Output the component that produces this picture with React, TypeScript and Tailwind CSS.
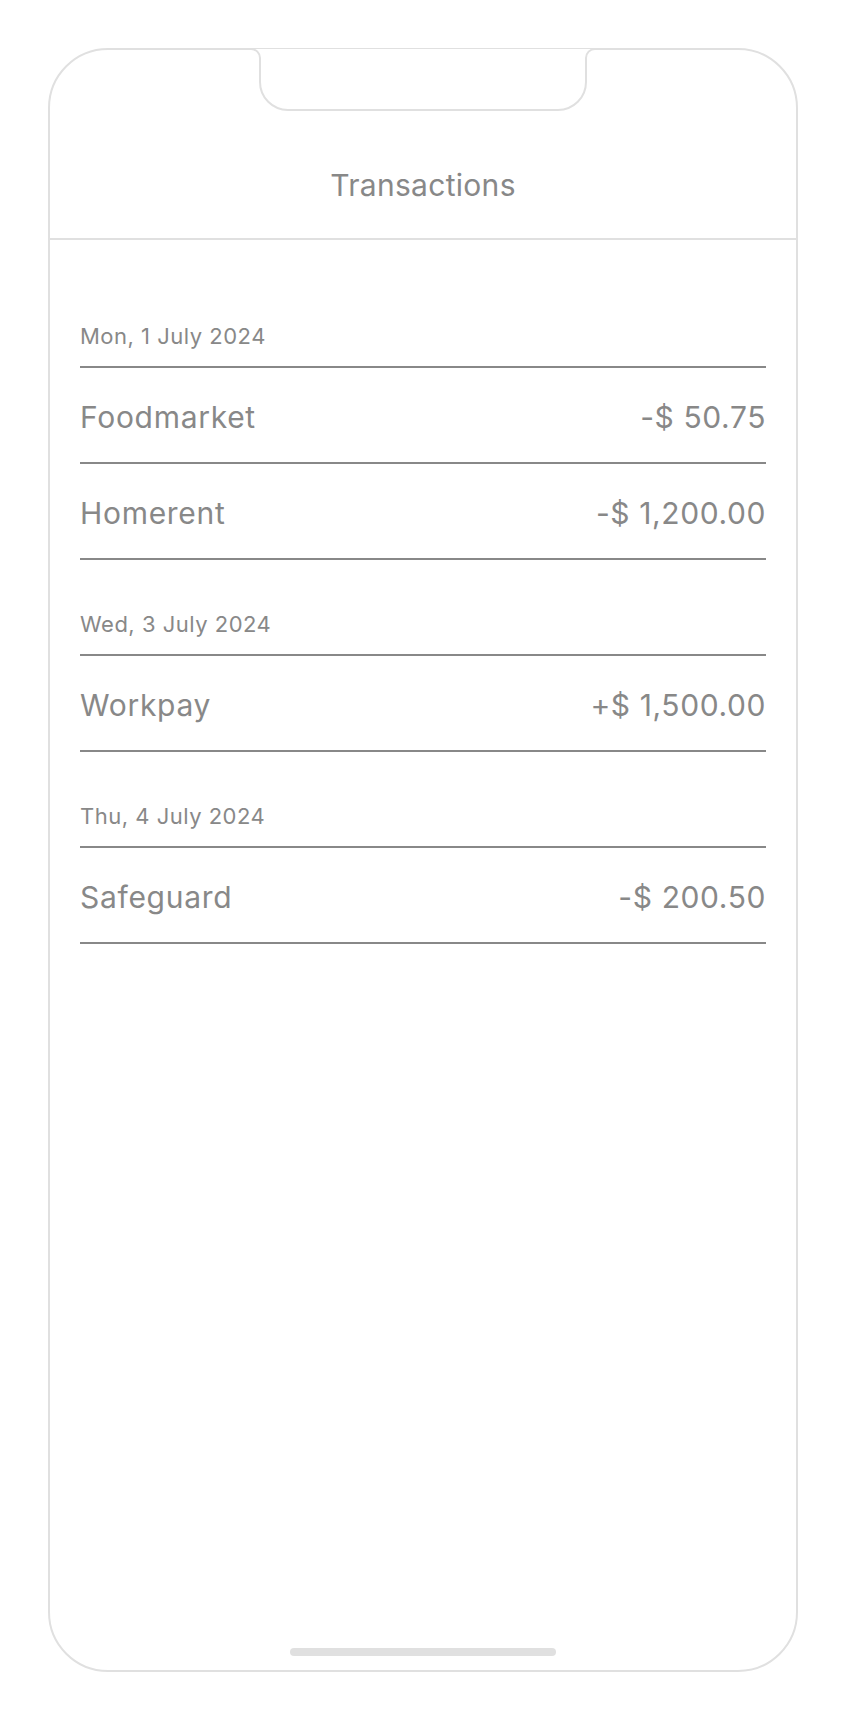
import React from "react";

type Txn = { name: string; amount: string };
type Day = { date: string; items: Txn[] };

const days: Day[] = [
  {
    date: "Mon, 1 July 2024",
    items: [
      { name: "Foodmarket", amount: "-$ 50.75" },
      { name: "Homerent", amount: "-$ 1,200.00" },
    ],
  },
  {
    date: "Wed, 3 July 2024",
    items: [{ name: "Workpay", amount: "+$ 1,500.00" }],
  },
  {
    date: "Thu, 4 July 2024",
    items: [{ name: "Safeguard", amount: "-$ 200.50" }],
  },
];

const Notch: React.FC = () => (
  <svg
    className="absolute left-1/2 top-[-2px] -translate-x-1/2"
    width="346"
    height="66"
    viewBox="0 0 346 66"
    fill="none"
  >
    {/* flares + cutout */}
    <path
      d="M1 1 A9 9 0 0 1 10 10 L10 34 A28 28 0 0 0 38 62 L308 62 A28 28 0 0 0 336 34 L336 10 A9 9 0 0 1 345 1"
      stroke="#e0e0e0"
      strokeWidth="2"
      fill="#ffffff"
    />
  </svg>
);

export default function App() {
  return (
    <div
      className="min-h-[1720px] w-full bg-white p-12"
      style={{ fontFamily: "Inter, 'Noto Sans', sans-serif" }}
    >
      <div className="relative flex h-[1624px] w-[750px] flex-col rounded-[60px] border-2 border-[#e0e0e0] bg-white">
        <Notch />

        {/* Header */}
        <div className="flex h-[190px] items-end justify-center border-b-2 border-[#e0e0e0] pb-[33px]">
          <h1 className="text-[30px] leading-[40px] font-normal tracking-[0.3px] text-[#888888]">
            Transactions
          </h1>
        </div>

        {/* List */}
        <div className="flex flex-col px-[30px] pt-[32px]">
          {days.map((day) => (
            <div key={day.date} className="flex flex-col">
              <div className="flex h-[96px] items-end border-b-2 border-[#888888] pb-[19px]">
                <span className="text-[22px] leading-none tracking-[0.5px] text-[#888888]">
                  {day.date}
                </span>
              </div>
              {day.items.map((t) => (
                <div
                  key={t.name}
                  className="flex h-[96px] items-center justify-between border-b-2 border-[#888888] pt-[3px]"
                >
                  <span className="text-[30px] leading-none tracking-[0.7px] text-[#888888]">
                    {t.name}
                  </span>
                  <span className="text-[30px] leading-none tracking-[0.6px] text-[#888888]">
                    {t.amount}
                  </span>
                </div>
              ))}
            </div>
          ))}
        </div>

        {/* Home indicator */}
        <div className="mt-auto mb-[14px] h-[8px] w-[266px] self-center rounded-full bg-[#e0e0e0]" />
      </div>
    </div>
  );
}
